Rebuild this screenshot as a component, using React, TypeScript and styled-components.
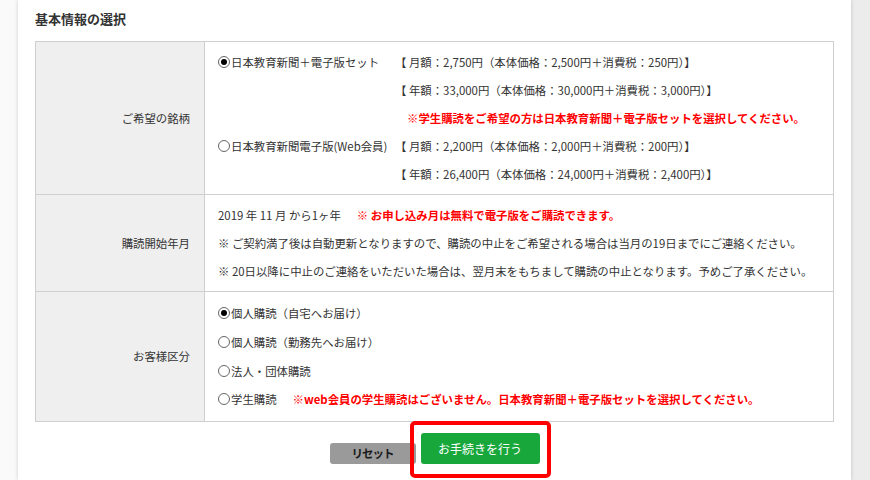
import React from 'react';
import styled, {createGlobalStyle} from "styled-components";

const GlobalStyle = createGlobalStyle`
  html, body {
    margin: 0;
    padding: 0;
    height: 100%;
    background: linear-gradient(90deg, #fafafa 0%, #ececec 100%);
  }
  body {
    font-family: "Noto Sans CJK JP", "Noto Sans", sans-serif;
    color: #333;
    overflow: hidden;
  }
`

const prices = {
    set: [
        "【 月額：2,750円（本体価格：2,500円＋消費税：250円）】",
        "【 年額：33,000円（本体価格：30,000円＋消費税：3,000円）】",
    ],
    web: [
        "【 月額：2,200円（本体価格：2,000円＋消費税：200円）】",
        "【 年額：26,400円（本体価格：24,000円＋消費税：2,400円）】",
    ],
}

const Radio = ({checked, children}: {checked?: boolean, children: React.ReactNode}) => (
    <RadioLabel>
        <RadioMark checked={checked}/>
        {children}
    </RadioLabel>
)

export default function App() {
    return (
        <>
            <GlobalStyle/>
            <Page>
                <Panel>
                    <Title>基本情報の選択</Title>
                    <Table>
                        <tbody>
                        <tr>
                            <Label>ご希望の銘柄</Label>
                            <Cell>
                                <PlanGrid>
                                    <Radio checked>日本教育新聞＋電子版セット</Radio>
                                    <span>{prices.set[0]}</span>
                                    <span/>
                                    <span>{prices.set[1]}</span>
                                    <span/>
                                    <Note indent>※学生購読をご希望の方は日本教育新聞＋電子版セットを選択してください。</Note>
                                    <Radio>日本教育新聞電子版(Web会員)</Radio>
                                    <span>{prices.web[0]}</span>
                                    <span/>
                                    <span>{prices.web[1]}</span>
                                </PlanGrid>
                            </Cell>
                        </tr>
                        <tr>
                            <Label>購読開始年月</Label>
                            <Cell>
                                <Line>2019 年 11 月 から1ヶ年<Note gap>※ お申し込み月は無料で電子版をご購読できます。</Note></Line>
                                <Line>※ ご契約満了後は自動更新となりますので、購読の中止をご希望される場合は当月の19日までにご連絡ください。</Line>
                                <Line>※ 20日以降に中止のご連絡をいただいた場合は、翌月末をもちまして購読の中止となります。予めご了承ください。</Line>
                            </Cell>
                        </tr>
                        <tr>
                            <Label>お客様区分</Label>
                            <Cell loose>
                                <Line loose><Radio checked>個人購読（自宅へお届け）</Radio></Line>
                                <Line loose><Radio>個人購読（勤務先へお届け）</Radio></Line>
                                <Line loose><Radio>法人・団体購読</Radio></Line>
                                <Line loose>
                                    <Radio>学生購読</Radio>
                                    <Note gap>※web会員の学生購読はございません。日本教育新聞＋電子版セットを選択してください。</Note>
                                </Line>
                            </Cell>
                        </tr>
                        </tbody>
                    </Table>
                    <Actions>
                        <ResetButton>リセット</ResetButton>
                        <SubmitWrap>
                            <SubmitButton>お手続きを行う</SubmitButton>
                            <Highlight/>
                        </SubmitWrap>
                    </Actions>
                </Panel>
            </Page>
        </>
    );
}

const Page = styled.div`
  padding: 0 19px 0 18px;
  height: 100vh;
`

const Panel = styled.div`
  background: #fff;
  height: 100%;
  padding: 10px 17px 0 17px;
  box-sizing: border-box;
  box-shadow: 0 0 4px rgba(0, 0, 0, 0.18);
`

const Title = styled.h2`
  margin: 0 0 14px 0;
  font-size: 13px;
  line-height: 17px;
  font-weight: 700;
  color: #333;
`

const Table = styled.table`
  width: 100%;
  border-collapse: collapse;
  font-size: 11.4px;

  td, th {
    border: 1px solid #cfcfcf;
  }
`

const Label = styled.th`
  width: 154px;
  background: #efefef;
  text-align: right;
  font-weight: 400;
  padding: 0 14px 0 0;
  vertical-align: middle;
`

const Cell = styled.td<{loose?: boolean}>`
  padding: ${p => p.loose ? "7px 13px 7px" : "6px 13px 6px"};
  line-height: 28px;
  vertical-align: top;
`

const PlanGrid = styled.div`
  display: grid;
  grid-template-columns: 177px auto;
  grid-auto-rows: 28px;
  align-items: center;
  white-space: nowrap;
`

const Line = styled.div<{loose?: boolean}>`
  display: flex;
  align-items: center;
  height: ${p => p.loose ? "28.7px" : "28px"};
  white-space: nowrap;
`

const Note = styled.span<{indent?: boolean, gap?: boolean}>`
  color: #ff0000;
  font-weight: 700;
  margin-left: ${p => p.indent ? "12px" : p.gap ? "16px" : "0"};
`

const RadioLabel = styled.span`
  display: inline-flex;
  align-items: center;
  white-space: nowrap;
`

const RadioMark = styled.span<{checked?: boolean}>`
  position: relative;
  display: inline-block;
  width: 10px;
  height: 10px;
  border: 1px solid #666;
  border-radius: 50%;
  background: #fff;
  margin-right: 1px;

  &::after {
    content: "";
    display: ${p => p.checked ? "block" : "none"};
    position: absolute;
    left: 2px;
    top: 2px;
    width: 6px;
    height: 6px;
    border-radius: 50%;
    background: #000;
  }
`

const Actions = styled.div`
  display: flex;
  justify-content: center;
  align-items: flex-end;
  gap: 5px;
  margin-top: 11px;
`

const ResetButton = styled.button`
  width: 86px;
  height: 21px;
  border: none;
  border-radius: 3px;
  background: #9a9a9a;
  color: #1a1a1a;
  font-family: "Noto Sans CJK JP", sans-serif;
  font-size: 11.5px;
  font-weight: 700;
  letter-spacing: -1px;
  padding: 0;
`

const SubmitWrap = styled.div`
  position: relative;
`

const SubmitButton = styled.button`
  display: block;
  width: 119px;
  height: 31px;
  border: none;
  border-radius: 3px;
  background: #17a73b;
  color: #fff;
  font-family: "Noto Sans CJK JP", sans-serif;
  font-size: 12px;
  padding: 0;
`

const Highlight = styled.div`
  position: absolute;
  top: -12px;
  left: -11px;
  right: -11px;
  bottom: -14px;
  border: 4px solid #ff0000;
  border-radius: 5px;
  pointer-events: none;
`
